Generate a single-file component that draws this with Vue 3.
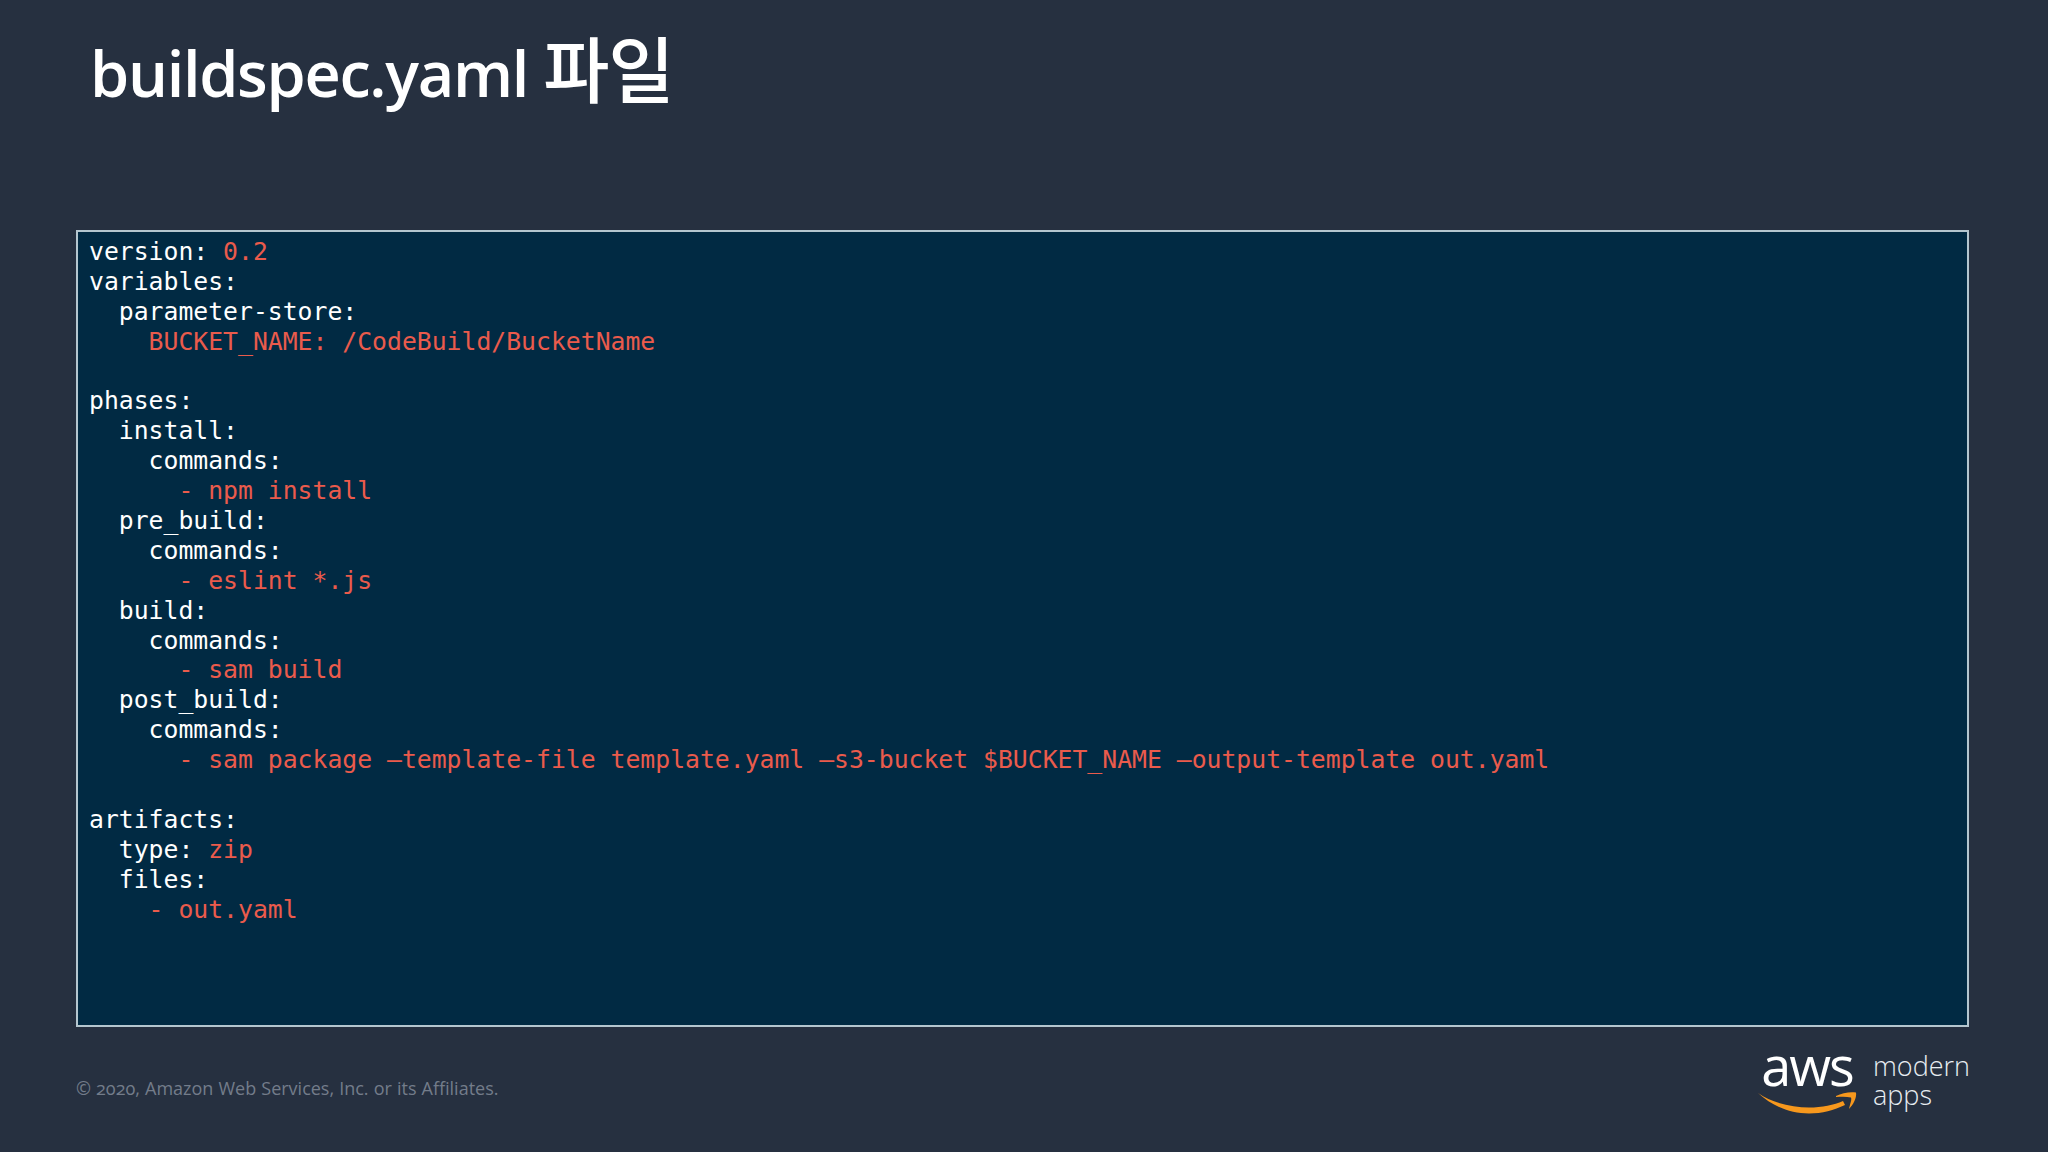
<script setup>
const lines = [
  [['version: ', 0], ['0.2', 1]],
  [['variables:', 0]],
  [['  parameter-store:', 0]],
  [['    BUCKET_NAME: /CodeBuild/BucketName', 1]],
  [],
  [['phases:', 0]],
  [['  install:', 0]],
  [['    commands:', 0]],
  [['      - npm install', 1]],
  [['  pre_build:', 0]],
  [['    commands:', 0]],
  [['      - eslint *.js', 1]],
  [['  build:', 0]],
  [['    commands:', 0]],
  [['      - sam build', 1]],
  [['  post_build:', 0]],
  [['    commands:', 0]],
  [['      - sam package –template-file template.yaml –s3-bucket $BUCKET_NAME –output-template out.yaml', 1]],
  [],
  [['artifacts:', 0]],
  [['  type: ', 0], ['zip', 1]],
  [['  files:', 0]],
  [['    - out.yaml', 1]],
]
</script>

<template>
  <div class="slide">
    <h1 class="title">buildspec.yaml <span class="ko">파일</span></h1>
    <div class="code">
      <div v-for="(line, i) in lines" :key="i" class="line">
        <span v-for="(part, j) in line" :key="j" :class="{ red: part[1] }">{{ part[0] }}</span>
      </div>
    </div>
    <footer class="foot">
      <span class="copy">© 2020, Amazon Web Services, Inc. or its Affiliates.</span>
      <div class="logo">
        <div class="aws">
          <span class="aws-word">aws</span>
          <svg class="smile" width="102" height="26" viewBox="0 0 102 26">
            <path d="M2 3 C16 13 36 17.5 53 17.5 C66 17.5 78 15 87 11 L89 15 C78 20 66 23.5 53 23.5 C34 23.5 16 16 2 3 Z" fill="#f7981d"/>
            <path d="M80 6 C86 3 94 1.5 100 2.5 C101 8 97 15 93 19 C94 14 96 10 95 7.5 C91 6.5 86 6.5 80 7 Z" fill="#f7981d"/>
          </svg>
        </div>
        <div class="modern">modern<br />apps</div>
      </div>
    </footer>
  </div>
</template>

<style>
html, body { margin: 0; background: #263040; }
</style>

<style scoped>
.slide {
  width: 2048px;
  height: 1152px;
  box-sizing: border-box;
  padding: 0 79px 0 76px;
  display: flex;
  flex-direction: column;
  overflow: hidden;
  background: #263040;
  color: #fff;
}
.title {
  margin: 26px 0 0 14px;
  height: 204px;
  font: 600 63px/94px "Open Sans", "Noto Sans CJK KR", sans-serif;
  letter-spacing: -1.3px;
  white-space: nowrap;
}
.ko {
  font-size: 72px;
  font-weight: 500;
  letter-spacing: -1px;
  line-height: 0;
}
.code {
  height: 797px;
  box-sizing: border-box;
  border: 2px solid #b4c6cf;
  background: #012a43;
  padding: 5px 11px;
  font-family: "DejaVu Sans Mono", monospace;
  font-size: 24.75px;
  white-space: pre;
}
.line {
  height: 29.9px;
  line-height: 29.9px;
}
.red { color: #ea5b4c; }
.foot {
  flex: 1;
  display: flex;
  justify-content: space-between;
  align-items: flex-start;
}
.copy {
  margin-top: 48px;
  font: 400 18px/26px "Open Sans", sans-serif;
  font-feature-settings: "onum";
  color: #737c8a;
  word-spacing: 0.4px;
}
.logo {
  display: flex;
  align-items: flex-start;
  margin-right: -1px;
}
.aws {
  width: 100px;
  display: flex;
  flex-direction: column;
  align-items: center;
  margin-right: 16px;
  margin-top: 13px;
}
.aws-word {
  font: 500 54px/50px "Open Sans", sans-serif;
  letter-spacing: -2px;
  height: 50px;
  color: #fff;
}
.smile { display: block; flex: none; margin-top: 0; }
.modern {
  margin-top: 24px;
  font: 300 27px/29px "Open Sans", sans-serif;
  color: #e8edf2;
}
</style>
